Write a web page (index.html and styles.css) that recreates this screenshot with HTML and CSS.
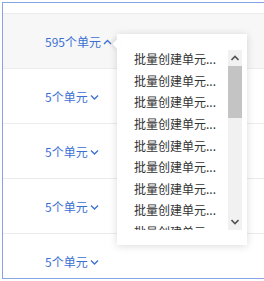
FILE: index.html
```html
<!DOCTYPE html>
<html lang="zh-CN">
<head>
    <meta charset="UTF-8">
    <meta name="viewport" content="width=device-width, initial-scale=1.0">
    <title>单元列表</title>
    <link rel="stylesheet" href="styles.css">
</head>
<body>

<div class="table">
    <div class="table-head"></div>

    <div class="table-row active">
        <span class="units">595个单元<svg class="chev" width="9" height="6" viewBox="0 0 9 6"><path d="M1 5L4.5 1.5L8 5" fill="none" stroke="#3b6fd4" stroke-width="1.3"/></svg></span>
    </div>
    <div class="table-row">
        <span class="units">5个单元<svg class="chev" width="9" height="6" viewBox="0 0 9 6"><path d="M1 1.5L4.5 5L8 1.5" fill="none" stroke="#3b6fd4" stroke-width="1.3"/></svg></span>
    </div>
    <div class="table-row">
        <span class="units">5个单元<svg class="chev" width="9" height="6" viewBox="0 0 9 6"><path d="M1 1.5L4.5 5L8 1.5" fill="none" stroke="#3b6fd4" stroke-width="1.3"/></svg></span>
    </div>
    <div class="table-row">
        <span class="units">5个单元<svg class="chev" width="9" height="6" viewBox="0 0 9 6"><path d="M1 1.5L4.5 5L8 1.5" fill="none" stroke="#3b6fd4" stroke-width="1.3"/></svg></span>
    </div>
    <div class="table-row">
        <span class="units">5个单元<svg class="chev" width="9" height="6" viewBox="0 0 9 6"><path d="M1 1.5L4.5 5L8 1.5" fill="none" stroke="#3b6fd4" stroke-width="1.3"/></svg></span>
    </div>

    <!-- unit dropdown -->
    <div class="popover">
        <div class="popover-arrow"></div>
        <div class="popover-body">
            <ul class="unit-list">
                <li>批量创建单元...</li>
                <li>批量创建单元...</li>
                <li>批量创建单元...</li>
                <li>批量创建单元...</li>
                <li>批量创建单元...</li>
                <li>批量创建单元...</li>
                <li>批量创建单元...</li>
                <li>批量创建单元...</li>
                <li>批量创建单元...</li>
            </ul>
            <div class="scrollbar">
                <div class="scroll-btn">
                    <svg width="8" height="6" viewBox="0 0 8 6"><path d="M0.5 5L4 1.5L7.5 5" fill="none" stroke="#555" stroke-width="1.6"/></svg>
                </div>
                <div class="scroll-track">
                    <div class="scroll-thumb"></div>
                </div>
                <div class="scroll-btn">
                    <svg width="8" height="6" viewBox="0 0 8 6"><path d="M0.5 1L4 4.5L7.5 1" fill="none" stroke="#555" stroke-width="1.6"/></svg>
                </div>
            </div>
        </div>
    </div>
</div>

</body>
</html>
```

FILE: styles.css
```css
body {
    margin: 0;
    font-family: "Noto Sans CJK SC", "Noto Sans", sans-serif;
    font-size: 12px;
    background-color: #fff;
    overflow: hidden;
}

.table {
    position: relative;
    margin: 2px 0 0 2px;
    width: 262px;
    height: 275px;
    border: 1px solid #86a4e4;
    border-right: none;
    box-sizing: content-box;
    overflow: hidden;
}

.table-head {
    height: 10px;
    border-bottom: 1px solid #ececec;
}

.table-row {
    height: 55px;
    border-bottom: 1px solid #ececec;
    display: flex;
    align-items: center;
    padding-left: 42px;
    padding-top: 2px;
    box-sizing: border-box;
}

.table-row.active {
    background-color: #f7f7f7;
}

.units {
    color: #3b6fd4;
    display: flex;
    align-items: center;
    line-height: 16px;
}

.chev {
    margin-left: 2px;
}

.popover {
    position: absolute;
    left: 114px;
    top: 31px;
    width: 130px;
    height: 211px;
    background-color: #fff;
    box-shadow: 0 1px 8px rgba(0, 0, 0, 0.15);
    box-sizing: border-box;
    padding: 16px 5px 15px 17px;
}

.popover-arrow {
    position: absolute;
    left: -3px;
    top: 6px;
    width: 8px;
    height: 8px;
    background-color: #fff;
    transform: rotate(45deg);
    box-shadow: -2px 2px 4px rgba(0, 0, 0, 0.08);
}

.popover-body {
    display: flex;
    height: 180px;
}

.unit-list {
    list-style: none;
    margin: 0;
    padding: 0;
    flex: 1;
    overflow: hidden;
    color: #333;
}

.unit-list li {
    height: 21.65px;
    line-height: 18px;
    white-space: nowrap;
}

.scrollbar {
    width: 14px;
    background-color: #f1f1f1;
    display: flex;
    flex-direction: column;
}

.scroll-btn {
    height: 16px;
    display: flex;
    align-items: center;
    justify-content: center;
}

.scroll-track {
    flex: 1;
}

.scroll-thumb {
    height: 52px;
    background-color: #c4c4c4;
}
```
